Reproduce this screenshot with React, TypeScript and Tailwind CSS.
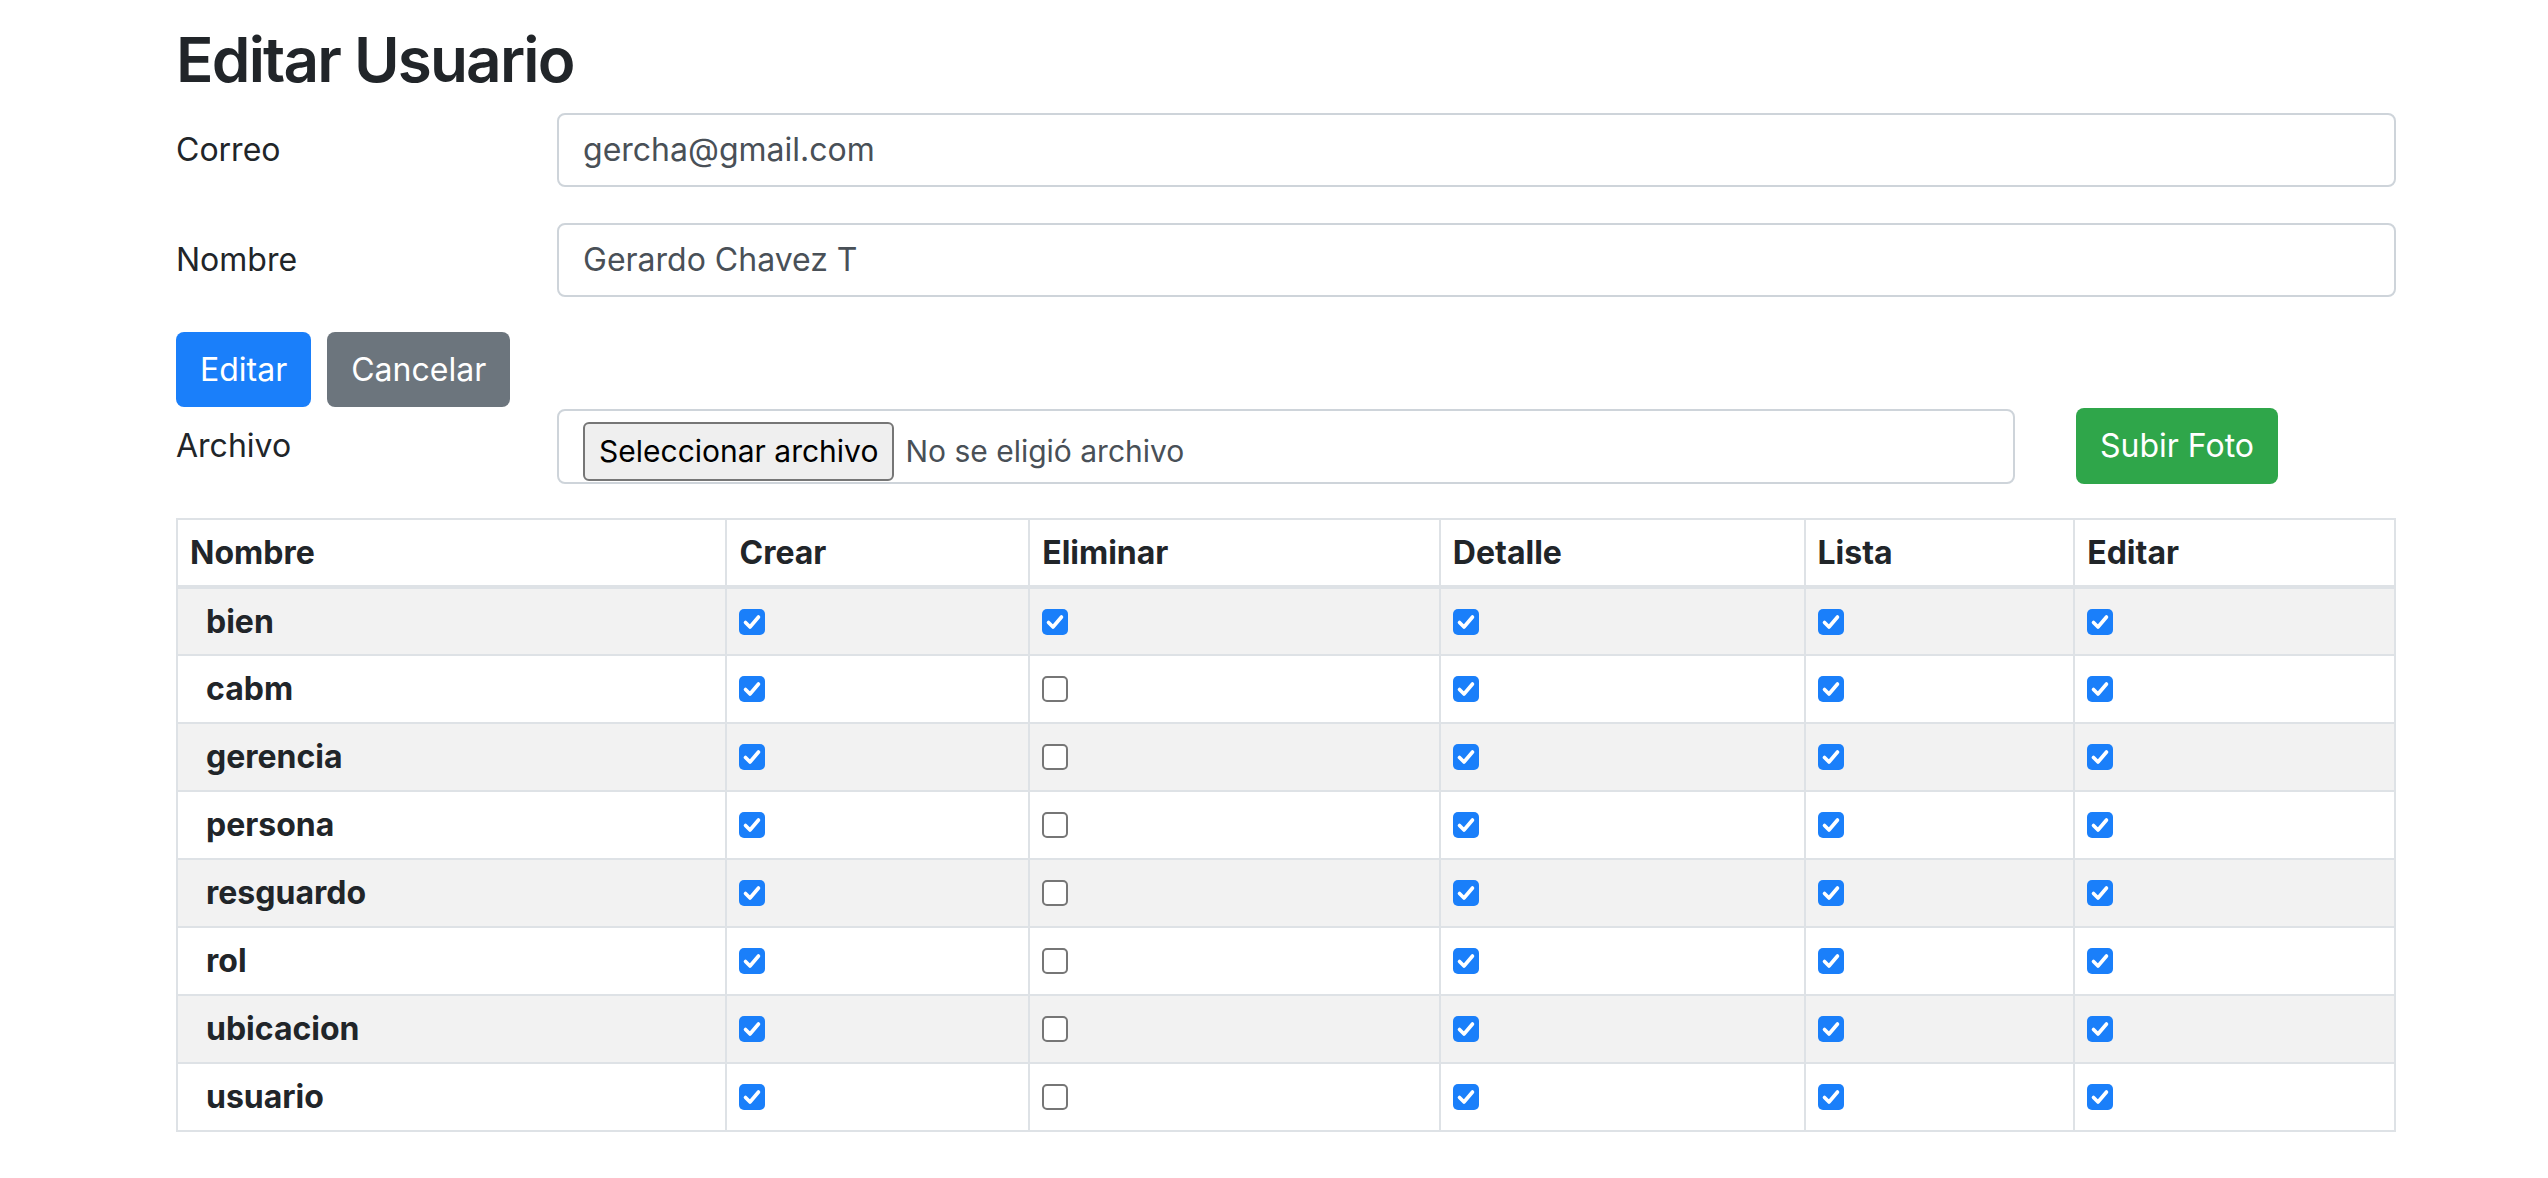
import React from "react";

interface Permiso {
  nombre: string;
  crear: boolean;
  eliminar: boolean;
  detalle: boolean;
  lista: boolean;
  editar: boolean;
}

const permisos: Permiso[] = [
  { nombre: "bien", crear: true, eliminar: true, detalle: true, lista: true, editar: true },
  { nombre: "cabm", crear: true, eliminar: false, detalle: true, lista: true, editar: true },
  { nombre: "gerencia", crear: true, eliminar: false, detalle: true, lista: true, editar: true },
  { nombre: "persona", crear: true, eliminar: false, detalle: true, lista: true, editar: true },
  { nombre: "resguardo", crear: true, eliminar: false, detalle: true, lista: true, editar: true },
  { nombre: "rol", crear: true, eliminar: false, detalle: true, lista: true, editar: true },
  { nombre: "ubicacion", crear: true, eliminar: false, detalle: true, lista: true, editar: true },
  { nombre: "usuario", crear: true, eliminar: false, detalle: true, lista: true, editar: true },
];

function Check({ checked }: { checked: boolean }) {
  if (!checked) {
    return <span className="block w-[26px] h-[26px] rounded-[5px] border-2 border-[#767676] bg-white" />;
  }
  return (
    <span className="flex w-[26px] h-[26px] rounded-[5px] bg-[#1a7ffa] items-center justify-center">
      <svg width="26" height="26" viewBox="0 0 26 26">
        <path d="M6.5 13.5 L11 18 L19.5 8" fill="none" stroke="white" strokeWidth="3.6" strokeLinecap="round" strokeLinejoin="round" />
      </svg>
    </span>
  );
}

function FormRow({ label, value }: { label: string; value: string }) {
  return (
    <div className="flex items-center">
      <label className="w-[381px] text-[32px]">{label}</label>
      <div className="flex-1 h-[74px] flex items-center border-2 border-[#ced4da] rounded-[8px] px-[24px] text-[32px] text-[#495057]">
        {value}
      </div>
    </div>
  );
}

const cols = ["Crear", "Eliminar", "Detalle", "Lista", "Editar"];

export default function App() {
  return (
    <div className="min-h-screen bg-white text-[#212529] font-['Inter','Liberation_Sans',sans-serif]">
      <div className="ml-[176px] w-[2220px] pt-[22px]">
        <h2 className="text-[62px] leading-[75px] font-semibold tracking-[-1.8px] mb-[16px]">Editar Usuario</h2>

        <FormRow label="Correo" value="gercha@gmail.com" />
        <div className="mt-[36px]">
          <FormRow label="Nombre" value="Gerardo Chavez T" />
        </div>

        <div className="mt-[35px] flex gap-[16px]">
          <button className="h-[75px] px-[24px] text-[32px] text-white bg-[#1a7ffa] rounded-[8px]">Editar</button>
          <button className="h-[75px] px-[24px] text-[32px] text-white bg-[#6c757d] rounded-[8px]">Cancelar</button>
        </div>

        <div className="mt-[1px] flex items-center">
          <label className="w-[381px] text-[32px]">Archivo</label>
          <div className="w-[1458px] h-[75px] border-2 border-[#ced4da] rounded-[8px] pl-[24px] pt-[11px] flex items-start">
            <span className="h-[59px] px-[14px] flex items-center border-2 border-[#767676] bg-[#efefef] rounded-[6px] text-[30px] text-black whitespace-nowrap">
              Seleccionar archivo
            </span>
            <span className="ml-[11px] h-[59px] flex items-center text-[30px] text-[#495057] whitespace-nowrap">
              No se eligió archivo
            </span>
          </div>
          <button className="ml-[61px] h-[76px] px-[24px] text-[32px] text-white bg-[#2fa64a] rounded-[8px]">Subir Foto</button>
        </div>

        <table className="mt-[34px] w-[2220px] border-collapse border-2 border-[#dee2e6] text-[32px]">
          <colgroup>
            <col className="w-[550px]" />
            <col className="w-[303px]" />
            <col className="w-[411px]" />
            <col className="w-[365px]" />
            <col className="w-[270px]" />
            <col className="w-[321px]" />
          </colgroup>
          <thead>
            <tr className="h-[68px]">
              <th className="text-left font-bold px-[12px] border-2 border-b-4 border-[#dee2e6]">Nombre</th>
              {cols.map((c) => (
                <th key={c} className="text-left font-bold px-[12px] border-2 border-b-4 border-[#dee2e6]">
                  {c}
                </th>
              ))}
            </tr>
          </thead>
          <tbody>
            {permisos.map((p, i) => (
              <tr key={p.nombre} className={i % 2 === 0 ? "h-[68px] bg-[#f2f2f2]" : "h-[68px] bg-white"}>
                <th className="text-left font-bold pl-[28px] border-2 border-[#dee2e6]">{p.nombre}</th>
                {[p.crear, p.eliminar, p.detalle, p.lista, p.editar].map((v, j) => (
                  <td key={j} className="px-[12px] border-2 border-[#dee2e6] align-middle">
                    <Check checked={v} />
                  </td>
                ))}
              </tr>
            ))}
          </tbody>
        </table>
      </div>
    </div>
  );
}
